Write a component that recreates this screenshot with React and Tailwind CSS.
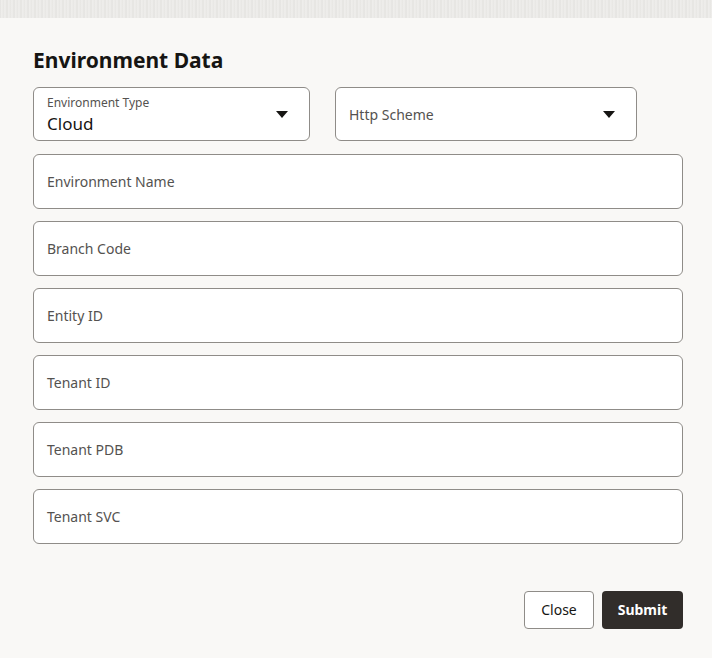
import React from 'react';

const fields = ['Environment Name', 'Branch Code', 'Entity ID', 'Tenant ID', 'Tenant PDB', 'Tenant SVC'];

const Caret = () => (
  <svg width="12" height="7" viewBox="0 0 12 7" className="shrink-0">
    <path d="M0 0 H12 L6 7 Z" fill="#161513" />
  </svg>
);

const App = () => {
  return (
    <div
      className="w-[712px] h-[658px] bg-[#f9f8f6] flex flex-col text-[#161513]"
      style={{ fontFamily: '"Noto Sans", "Liberation Sans", sans-serif' }}
    >
      {/* textured header strip */}
      <div className="h-[18px] shrink-0 bg-[#ebeae8] bg-[repeating-linear-gradient(90deg,#e3e2df_0px,#f2f1ef_2px,#e6e5e2_3px,#f0efed_5px,#e4e3e0_7px)]" />

      <div className="flex-1 flex flex-col px-[33px] pt-[29px]">
        <h2 className="text-[21px] font-bold leading-[26px] mb-[14px]">Environment Data</h2>

        {/* Selects */}
        <div className="flex gap-[25px] mb-[13px]">
          <div className="w-[277px] h-[54px] bg-white border border-[#8f8c88] rounded-[6px] flex items-center pl-[13px] pr-[21px]">
            <div className="flex-1 flex flex-col gap-[2px]">
              <span className="text-[12px] leading-[16px] text-[#545250]">Environment Type</span>
              <span className="text-[17px] leading-[21px]">Cloud</span>
            </div>
            <Caret />
          </div>
          <div className="w-[302px] h-[54px] bg-white border border-[#8f8c88] rounded-[6px] flex items-center pl-[13px] pr-[21px]">
            <span className="flex-1 text-[14px] text-[#545250]">Http Scheme</span>
            <Caret />
          </div>
        </div>

        {/* Text inputs */}
        <div className="flex flex-col gap-[12.4px]">
          {fields.map((f) => (
            <div
              key={f}
              className="w-[650px] h-[54.6px] bg-white border border-[#8f8c88] rounded-[6px] flex items-center pl-[13px]"
            >
              <span className="text-[14px] text-[#545250]">{f}</span>
            </div>
          ))}
        </div>

        {/* Actions */}
        <div className="flex justify-end gap-[8px] mt-[47px] w-[650px]">
          <button className="h-[38px] w-[70px] bg-white border border-[#8f8c88] rounded-[4px] text-[14px] text-[#161513]">
            Close
          </button>
          <button className="h-[38px] w-[81px] bg-[#312d2a] rounded-[4px] text-[14px] font-bold text-white">
            Submit
          </button>
        </div>
      </div>
    </div>
  );
};

export default App;
